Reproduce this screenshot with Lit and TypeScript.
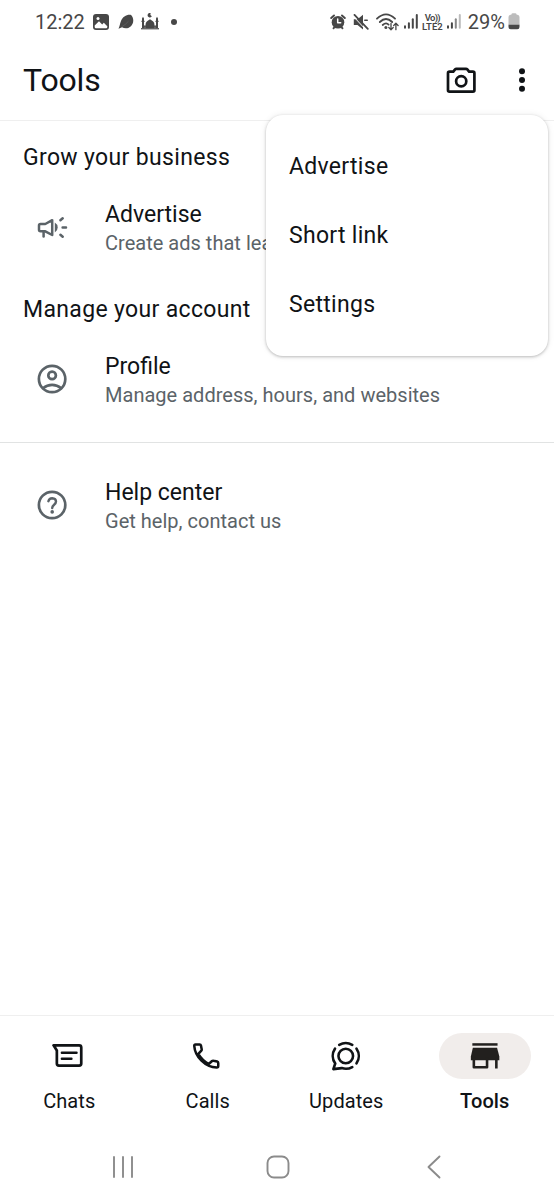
import { LitElement, html, css, svg } from "lit";
import { customElement, property } from "lit/decorators.js";

const icon = (box: string, body: unknown) => {
  const [, , w, h] = box.split(" ");
  return html`<svg viewBox=${box} width=${w} height=${h} fill="none" stroke-linecap="round" stroke-linejoin="round">${body}</svg>`;
};

// Status bar glyphs
const picture = icon("0 0 16 16", svg`
  <rect width="16" height="16" rx="3" fill="#474747"/>
  <path d="M1.700 11.600 6 7.200l3.200 3.200 1.600-1.600 3.500 3.400v.8q0 1.200-1.200 1.200H3q-1.300 0-1.300-1.200z" fill="#fff"/>
  <circle cx="5" cy="4.400" r="1.500" fill="#fff"/>`);
const leaf = icon("0 0 16 16", svg`
  <path d="M.5 14.800C1.600 12.400 1.800 10 2.900 7.200C4.600 2.500 9 .2 13.100.9 16.200 4.300 15.900 9.400 12.600 12.400 9.900 14.800 6.400 14.500 4 13.200 2.800 13.400 1.700 14.200.5 14.800Z" fill="#474747"/>
  <path d="M4 12.600Q7.500 10.800 10.200 7.600" stroke="#777" stroke-width=".4"/>`);
const mosque = icon("0 0 18 17", svg`
  <path d="M0 16.300V15h1V9H.5V7.800H1V5.500L2 3.800 3 5.500V7.800h.5V9H3v3.500h1.600V11Q4.800 8.500 9 6.200q4.200 2.300 4.400 4.800v1.500H15V9h-.5V7.800h.5V5.500l1-1.700 1 1.700v2.300h.5V9H17v6h1v1.300z" fill="#474747"/>
  <path d="M9.800.2A2.200 2.200 0 1 0 10.900 3 1.700 1.700 0 0 1 9.800.2Z" fill="#474747"/>
  <path d="M4 14.900V13.900M14 14.900V13.900M.5 16H17.500" stroke="#999" stroke-width=".7"/>`);
const alarm = icon("0 0 16 16", svg`
  <circle cx="8" cy="8.300" r="6.300" fill="#474747"/>
  <path d="M1.200 4 4 1.500M14.800 4 12 1.500M3.500 14.300 4.500 13M12.500 14.300 11.500 13" stroke="#474747" stroke-width="1.900"/>
  <path d="M7.700 5v3.800h3" stroke="#fff" stroke-width="1.500"/>`);
const muted = icon("0 0 16 16", svg`
  <path d="M.8 5.300H4.500L10 .8V15.400L4.500 11H.8Z" fill="#474747"/>
  <path d="M.4 2.400 12.700 15.600" stroke="#fff" stroke-width="1"/>
  <path d="M1.500.9 14.800 14.900" stroke="#474747" stroke-width="1.800"/>
  <path d="M11.800 6.300h2.400" stroke="#474747" stroke-width="1.600"/>`);
const wifi = icon("0 0 23 18", svg`
  <g stroke="#474747" stroke-width="1.800"><path d="M1 5.700Q10 -3 19 5.700"/><path d="M3.800 9Q10 3 16.200 9"/><path d="M6.700 12Q10 9 12.600 11.600"/></g>
  <circle cx="9.900" cy="14.500" r="1.500" fill="#474747"/>
  <path d="M15 10.300V16.500M12.800 14.500 15 16.700 17.200 14.500M19.900 16.700V10.500M17.700 12.500 19.900 10.300 22.100 12.500" stroke="#474747" stroke-width="1.300"/>`);
const signal = (strong: boolean) => icon("0 0 14 15", svg`
  <g stroke-width="2"><path d="M1 12.300V13.700M4.900 9.300V13.700" stroke="#474747"/>
  <path d="M8.800 5.200V13.700" stroke=${strong ? "#474747" : "#888"}/><path d="M12.800 1V13.700" stroke=${strong ? "#474747" : "#bcbcbc"}/></g>`);
const battery = icon("0 0 12 17", svg`
  <path d="M3.300 1.800Q3.300.3 4.500.3H7.500Q8.700.3 8.700 1.800H9.500Q11.500 2 11.500 4V12H.5V4Q.5 2 2.500 1.800Z" fill="#bcbcbc"/>
  <path d="M.5 11.700H11.500V14Q11.500 16.300 9.300 16.300H2.700Q.5 16.300 .5 14Z" fill="#474747"/>`);

// App glyphs
const camera = icon("446 66 31 28", svg`
  <path d="M449.500 71.700H453.300L455.100 69.400Q455.600 68.800 456.400 68.800H466Q466.800 68.800 467.300 69.400L469.100 71.700H472.900Q474.400 71.700 474.400 73.200V90.200Q474.400 91.600 472.900 91.600H449.500Q448 91.600 448 90.200V73.200Q448 71.700 449.500 71.700Z" stroke="#101316" stroke-width="2.700"/>
  <circle cx="461.200" cy="81.300" r="5.100" stroke="#101316" stroke-width="2.700"/>`);
const dots = icon("518 66 8 28", svg`<g fill="#101316"><circle cx="522" cy="71.300" r="3"/><circle cx="522" cy="80" r="3"/><circle cx="522" cy="88.700" r="3"/></g>`);
const megaphone = icon("36 211 32 32", svg`
  <g stroke="#5b6368" stroke-width="2.500"><path d="M45.300 224 52.200 220.200V235L45.300 231.300H40.500Q39 231.300 39 229.800V225.500Q39 224 40.500 224Z"/>
  <path d="M43.600 231.800V236.500"/><path d="M62.600 227.400H66M60.400 220.200 62.700 218.200M60.400 234.800 62.700 236.800"/></g>
  <path d="M54.800 222.500Q57.700 224.200 57.700 227.500T54.800 232.500Z" fill="#5b6368"/>`);
const profile = icon("36 363 32 32", svg`
  <g stroke="#5b6368" stroke-width="2.700"><circle cx="52.100" cy="379" r="13.200"/><circle cx="52.100" cy="375.400" r="3.800"/>
  <path d="M43.300 388.100Q47 384.900 52.100 384.900T60.900 388.100"/></g>`);
const help = icon("36 489 32 32", svg`
  <circle cx="52.100" cy="505" r="13.200" stroke="#5b6368" stroke-width="2.700"/>
  <path d="M48.400 501.200Q49.200 498.300 52.200 498.300 56 498.500 56 501.600 56 503.300 54.100 504.800 52.200 506.300 52.200 508" stroke="#5b6368" stroke-width="2.400"/>
  <circle cx="52.200" cy="511.900" r="1.800" fill="#5b6368"/>`);
const chats = icon("52.25 1040 34 32", svg`
  <g stroke="#101316" stroke-width="2.700"><path d="M53.800 1045.300H79.400Q81.500 1045.300 81.500 1047.400V1063.600Q81.500 1065.700 79.400 1065.700H59.200Q57.100 1065.700 57.100 1063.600V1050.500Z"/>
  <path d="M62.100 1052.800H76.800M62.100 1058.800H71.700" stroke-width="2.400"/></g>`);
const calls = icon("190.75 1040 34 32", svg`
  <path d="M195.200 1044.400H199.400Q200.500 1044.400 200.700 1045.400L201.500 1049.400Q201.600 1050.200 201.100 1050.700L198.100 1053.900Q202 1060.600 208.500 1064L211.800 1061Q212.400 1060.500 213.200 1060.700L216.900 1061.500Q218 1061.800 218 1062.900V1066Q218 1067.500 216.500 1067.500C205 1067 194.700 1056.700 194 1045.800Q194 1044.400 195.200 1044.400Z" stroke="#101316" stroke-width="2.500"/>`);
const updates = icon("329.25 1040 34 32", svg`
  <g stroke="#101316" stroke-width="2.600"><circle cx="346" cy="1056" r="7.300"/>
  <path d="M339.500 1044.900A13 13 0 0 1 352.500 1044.900M356.800 1048.700A13 13 0 0 1 356.800 1063.300M352.500 1067.100A13 13 0 0 1 342 1068.100L333.600 1069.100 335.500 1063.500A13 13 0 0 1 335.200 1048.700"/></g>`);
const store = icon("468.75 1040 32 32", svg`
  <path d="M472.100 1043.200H497.300V1045.700H472.100Z" fill="#22201e"/>
  <path d="M472.600 1047.700H496.800L499.100 1056.500V1060.300H470.600V1056.500Z" fill="#22201e"/>
  <path d="M473.600 1059V1067.300H486.800V1059M496.100 1059V1067.300" stroke="#22201e" stroke-width="2.600" stroke-linecap="square"/>`);

const rowIcons: Record<string, unknown> = { megaphone, profile, help };

@customElement("tool-row")
export class ToolRow extends LitElement {
  @property() glyph = "";
  @property() heading = "";
  @property() detail = "";
  static styles = css`
    :host { display: flex; align-items: flex-start; height: 58px; padding-left: 36px; }
    svg { display: block; flex: none; margin-top: 12px; }
    .text { margin-left: 37px; white-space: nowrap; }
    .heading { font-size: 23px; line-height: 32px; letter-spacing: 0; color: #101316; }
    .detail { font-size: 20px; line-height: 24px; letter-spacing: .02px; color: #5b6368; }
  `;
  render() {
    return html`${rowIcons[this.glyph]}
      <div class="text"><div class="heading">${this.heading}</div><div class="detail">${this.detail}</div></div>`;
  }
}

@customElement("app-root")
export class AppRoot extends LitElement {
  static styles = css`
    :host { display: flex; flex-direction: column; position: relative; box-sizing: border-box; width: 554px; height: 1200px; overflow: hidden; background: #fff; font-family: Roboto, sans-serif; color: #101316; white-space: nowrap; }
    svg { display: block; flex: none; }
    .status { display: flex; align-items: center; height: 43px; padding: 0 34px 0 35px; color: #474747; }
    .time { font-size: 20px; width: 58px; }
    .gap { margin-right: 7px; }
    .gap-l { margin-right: 9px; }
    .gap-xl { margin-right: 12px; }
    .gap-s { margin-right: 5px; }
    .dot { width: 6px; height: 6px; border-radius: 50%; background: #474747; }
    .right { display: flex; align-items: center; margin-left: auto; }
    .volte { display: flex; flex-direction: column; align-items: center; width: 21px; margin: 0 4px; font-size: 9.500px; line-height: 9px; font-weight: 600; }
    .vo { letter-spacing: -.7px; }
    .pct { font-size: 20px; margin: 0 3px 0 7px; }
    .bar { display: flex; align-items: center; box-sizing: border-box; height: 78px; padding: 0 28px 4px 23px; border-bottom: 1px solid #efefef; }
    h1 { flex: 1; margin: 0; font-size: 32px; font-weight: 400; letter-spacing: -.15px; }
    .bar .cam { margin-right: 41px; }
    main { flex: 1; padding-top: 12px; }
    h2 { margin: 0; padding-left: 23px; height: 48px; font-size: 23px; line-height: 50px; font-weight: 400; letter-spacing: .34px; }
    .first { margin: 18px 0 28px; }
    .second { margin: 18px 0 33px; }
    .third { margin-top: 34px; }
    .line { height: 1px; background: #e1e3e3; }
    .tabs { display: grid; grid-template-columns: repeat(4, 1fr); height: 115px; border-top: 1px solid #efefef; }
    .tab { display: flex; flex-direction: column; align-items: center; padding-top: 17px; font-size: 20px; line-height: 24px; letter-spacing: .08px; }
    .pill { display: grid; place-items: center; width: 92px; height: 46px; margin-bottom: 10px; border-radius: 23px; }
    .active { font-weight: 500; }
    .active .pill { background: #f1edeb; }
    .system { display: grid; grid-template-columns: 22px 24px 14px; justify-content: space-between; align-items: center; height: 69px; box-sizing: border-box; padding: 3px 113px 0 112px; }
    .home { margin-left: -3px; }
    .menu { position: absolute; top: 115px; left: 266px; width: 282px; height: 241px; box-sizing: border-box; padding: 17px 23px 0; border-radius: 17px; background: #fff; box-shadow: 0 1px 3px rgba(0,0,0,.24), 0 0 7px rgba(0,0,0,.08); }
    .item { font-size: 23px; line-height: 69px; letter-spacing: .3px; }
  `;

  render() {
    const tabs: [string, unknown][] = [["Chats", chats], ["Calls", calls], ["Updates", updates], ["Tools", store]];
    return html`
      <div class="status">
        <span class="time">12:22</span>
        <span class="gap-l">${picture}</span><span class="gap">${leaf}</span><span class="gap-xl">${mosque}</span><span class="dot"></span>
        <div class="right">
          <span class="gap">${alarm}</span><span class="gap">${muted}</span><span class="gap-s">${wifi}</span>
          ${signal(true)}
          <span class="volte"><span class="vo">Vo))</span><span>LTE2</span></span>
          ${signal(false)}<span class="pct">29%</span>${battery}
        </div>
      </div>
      <header class="bar"><h1>Tools</h1><span class="cam">${camera}</span>${dots}</header>
      <main>
        <h2>Grow your business</h2>
        <tool-row class="first" glyph="megaphone" heading="Advertise" detail="Create ads that lea"></tool-row>
        <h2>Manage your account</h2>
        <tool-row class="second" glyph="profile" heading="Profile" detail="Manage address, hours, and websites"></tool-row>
        <div class="line"></div>
        <tool-row class="third" glyph="help" heading="Help center" detail="Get help, contact us"></tool-row>
      </main>
      <nav class="tabs">
        ${tabs.map(([name, glyph]) => html`<div class="tab ${name === "Tools" ? "active" : ""}"><span class="pill">${glyph}</span>${name}</div>`)}
      </nav>
      <div class="system">
        ${icon("0 0 22 24", svg`<path d="M2 2V22M11 2V22M20 2V22" stroke="#8b8b8b" stroke-width="1.900"/>`)}
        <span class="home">${icon("0 0 24 24", svg`<rect x="1.500" y="1.500" width="21" height="21" rx="6.500" stroke="#8b8b8b" stroke-width="1.900"/>`)}</span>
        ${icon("0 0 14 24", svg`<path d="M12.500 1.500 1.500 12 12.500 22.500" stroke="#8b8b8b" stroke-width="1.900"/>`)}
      </div>
      <div class="menu"><div class="item">Advertise</div><div class="item">Short link</div><div class="item">Settings</div></div>
    `;
  }
}
